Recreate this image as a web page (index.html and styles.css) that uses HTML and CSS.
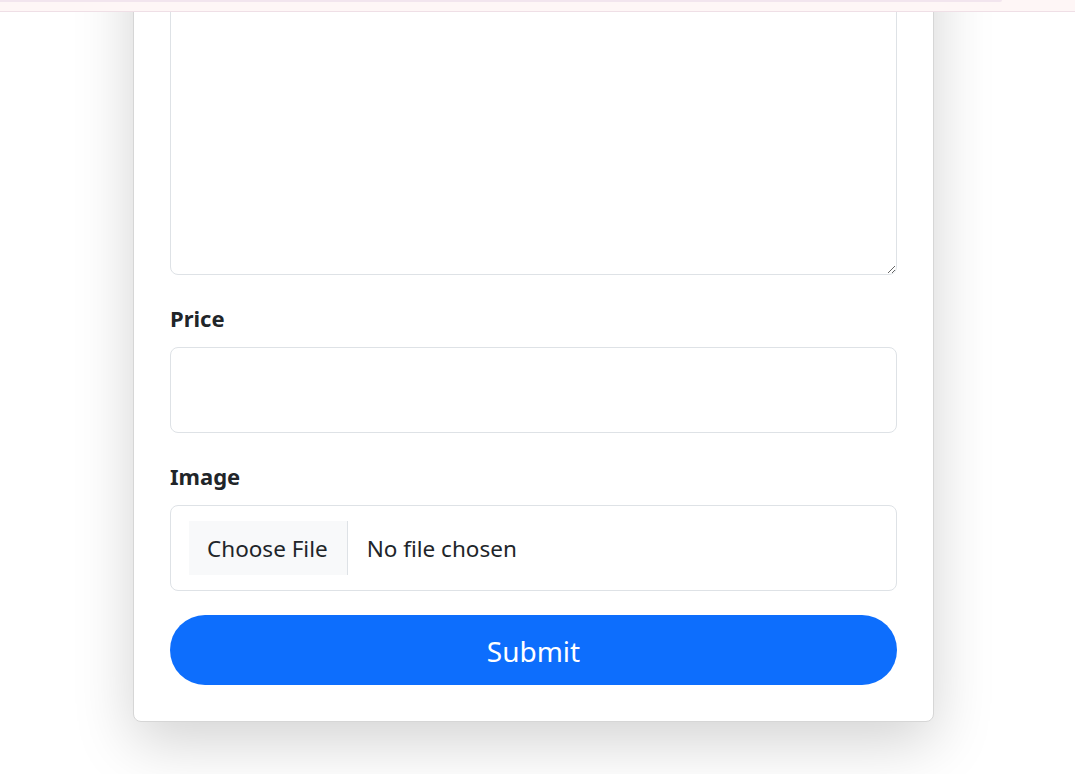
FILE: index.html
```html
<!DOCTYPE html>
<html lang="en">
<head>
<meta charset="utf-8">
<title>Add Product</title>
<link rel="stylesheet" href="styles.css">
</head>
<body>
<header class="topbar"><div class="topbar-strip"></div></header>
<main class="page">
  <form class="card">
    <div class="field">
      <textarea class="control control-area" id="desc" aria-label="Description"></textarea>
    </div>
    <div class="field">
      <label class="field-label" for="price">Price</label>
      <input class="control" id="price" type="text">
    </div>
    <div class="field">
      <span class="field-label">Image</span>
      <label class="file-control">
        <span class="file-button">Choose File</span>
        <span class="file-name">No file chosen</span>
      </label>
    </div>
    <button class="submit" type="button">Submit</button>
  </form>
</main>
</body>
</html>
```

FILE: styles.css
```css
* { box-sizing: border-box; }

html, body {
  margin: 0;
  padding: 0;
  background: #ffffff;
  font-family: "Noto Sans", "Open Sans", sans-serif;
  color: #212529;
}

.topbar {
  position: fixed;
  top: 0;
  left: 0;
  right: 0;
  height: 12px;
  background: #fef6f6;
  border-bottom: 1px solid #efdfe6;
  z-index: 10;
}

.topbar-strip {
  width: 1002px;
  height: 2px;
  background: #f2e5ee;
  border-bottom-right-radius: 3px;
}

.page {
  height: 100vh;
  overflow: hidden;
  display: flex;
  flex-direction: column;
  justify-content: flex-end;
  align-items: center;
  padding: 0 8px 52px 0;
}

.card {
  flex: none;
  width: 801px;
  background: #ffffff;
  border: 1px solid #d6d6d6;
  border-radius: 8px;
  box-shadow: 0 20px 60px rgba(0, 0, 0, 0.175);
  padding: 36px;
  display: flex;
  flex-direction: column;
}

.field {
  display: flex;
  flex-direction: column;
  margin-bottom: 24px;
}

.field-label {
  font-size: 22px;
  font-weight: 700;
  line-height: 39px;
  margin-bottom: 9px;
}

.control {
  display: block;
  width: 100%;
  font-family: inherit;
  font-size: 22.5px;
  line-height: 34px;
  color: #212529;
  background: #ffffff;
  border: 1px solid #dee2e6;
  border-radius: 8px;
  padding: 25px 18px;
  outline: none;
}

.control-area {
  height: 330px;
  resize: vertical;
}

.file-control {
  display: flex;
  align-items: center;
  height: 86px;
  border: 1px solid #dee2e6;
  border-radius: 8px;
  padding: 15px 18px;
  font-size: 22.5px;
  line-height: 34px;
}

.file-button {
  display: block;
  background: #f8f9fa;
  border-right: 1px solid #dee2e6;
  padding: 11px 19px 9px 18px;
  color: #212529;
}

.file-name {
  padding: 2px 0 0 19px;
  color: #212529;
}

.submit {
  display: block;
  width: 100%;
  height: 70px;
  border: none;
  border-radius: 35px;
  background: #0d6efd;
  color: #ffffff;
  font-family: inherit;
  font-size: 28px;
  line-height: 42px;
  padding: 15px 0 13px;
}
```
